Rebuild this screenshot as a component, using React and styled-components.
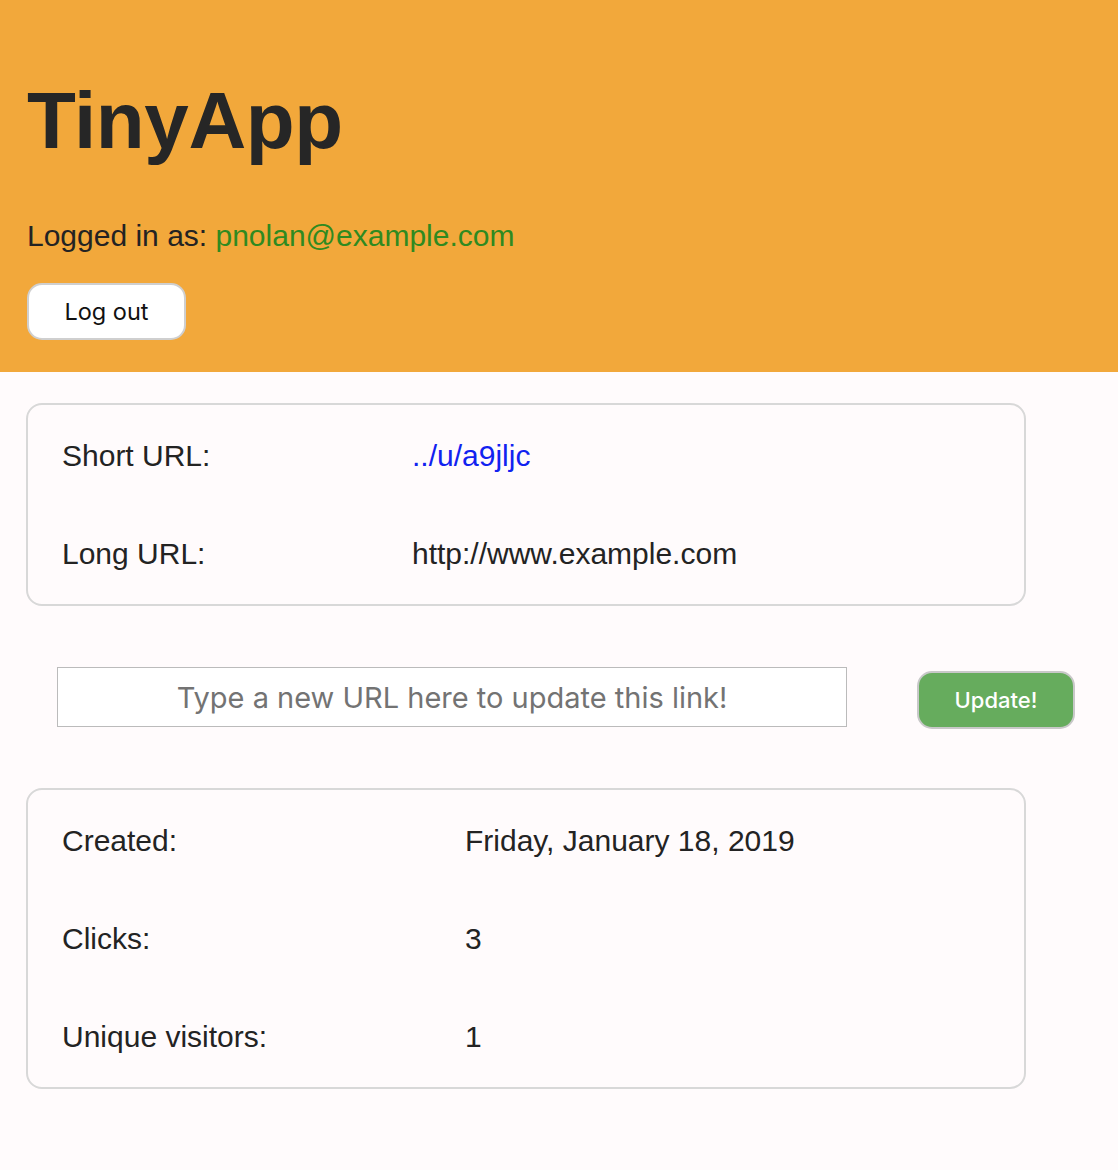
import React from 'react';
import styled, { createGlobalStyle } from 'styled-components';

const GlobalStyle = createGlobalStyle`
  body {
    margin: 0;
    background: #fffbfc;
    font-family: 'Liberation Sans', Arial, sans-serif;
    color: #232323;
  }
`;

const App = () => {
  return (
    <>
      <GlobalStyle />
      <Header>
        <Title>TinyApp</Title>
        <LoggedIn>
          Logged in as: <Email>pnolan@example.com</Email>
        </LoggedIn>
        <LogoutButton>Log out</LogoutButton>
      </Header>
      <Main>
        <Card $labelWidth={350}>
          <Row>
            <Label>Short URL:</Label>
            <Value>
              <ShortLink href="#">../u/a9jljc</ShortLink>
            </Value>
          </Row>
          <Row>
            <Label>Long URL:</Label>
            <Value>http://www.example.com</Value>
          </Row>
        </Card>
        <UpdateForm>
          <UrlInput placeholder="Type a new URL here to update this link!" />
          <UpdateButton>Update!</UpdateButton>
        </UpdateForm>
        <Card $labelWidth={403}>
          <Row>
            <Label>Created:</Label>
            <Value>Friday, January 18, 2019</Value>
          </Row>
          <Row>
            <Label>Clicks:</Label>
            <Value>3</Value>
          </Row>
          <Row>
            <Label>Unique visitors:</Label>
            <Value>1</Value>
          </Row>
        </Card>
      </Main>
    </>
  );
};

const Header = styled.header`
  background: #f2a83b;
  padding: 73px 27px 32px;
  display: flex;
  flex-direction: column;
  align-items: flex-start;
`;
const Title = styled.h1`
  margin: 0;
  font-size: 80px;
  line-height: 96px;
  font-weight: 700;
  letter-spacing: -0.4px;
  color: #262626;
`;
const LoggedIn = styled.p`
  margin: 49px 0 0;
  font-size: 30px;
  line-height: 36px;
  color: #232323;
`;
const Email = styled.span`
  color: #2f8a20;
`;
const LogoutButton = styled.button`
  margin-top: 29px;
  width: 159px;
  height: 57px;
  background: #fff;
  border: 2px solid #cfcfcf;
  border-radius: 15px;
  font-family: Inter, 'Noto Sans', sans-serif;
  font-size: 23.5px;
  color: #111;
  cursor: pointer;
`;
const Main = styled.main`
  padding: 31px 26px 80px;
`;
const Card = styled.section`
  width: 1000px;
  box-sizing: border-box;
  border: 2px solid #d8d8d8;
  border-radius: 16px;
  padding: 2px 34px 1px;
  display: grid;
  grid-template-columns: ${p => p.$labelWidth}px 1fr;
`;
const Row = styled.div`
  display: contents;
`;
const Label = styled.div`
  height: 98px;
  line-height: 98px;
  font-size: 30px;
`;
const Value = styled(Label)``;
const ShortLink = styled.a`
  color: #1122f0;
  text-decoration: none;
`;
const UpdateForm = styled.form`
  display: flex;
  align-items: flex-start;
  gap: 70px;
  margin: 61px 0 59px 31px;
`;
const UrlInput = styled.input`
  width: 790px;
  height: 60px;
  box-sizing: border-box;
  border: 1px solid #bbb;
  background: #fff;
  text-align: center;
  font-family: Inter, 'Noto Sans', sans-serif;
  font-size: 29px;
  &::placeholder {
    color: #737373;
  }
`;
const UpdateButton = styled.button`
  margin-top: 4px;
  width: 158px;
  height: 58px;
  background: #66ac5d;
  border: 2px solid #c8c8c8;
  border-radius: 15px;
  color: #fff;
  font-family: Inter, 'Noto Sans', sans-serif;
  font-size: 22px;
  font-weight: 500;
  cursor: pointer;
`;

export default App;
